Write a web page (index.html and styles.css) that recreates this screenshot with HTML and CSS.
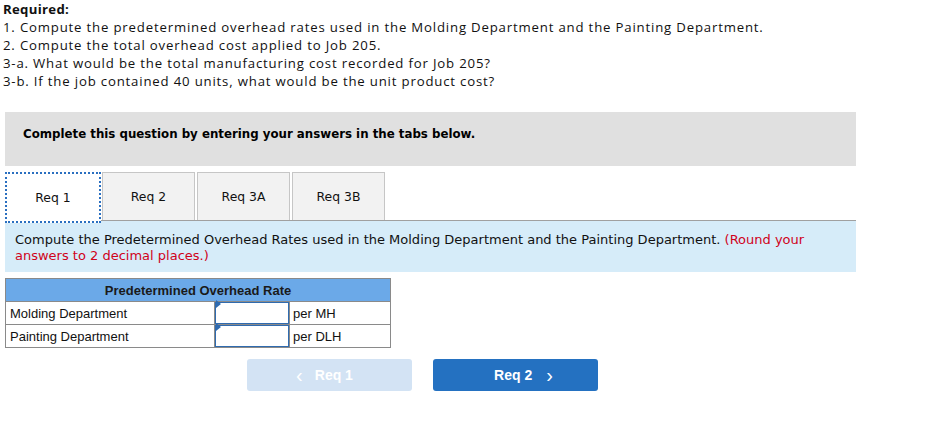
FILE: index.html
```html
<!DOCTYPE html>
<html>
<head>
<meta charset="utf-8">
<link rel="stylesheet" href="styles.css">
</head>
<body>
<div class="required">
  <div class="req-title">Required:</div>
  <div>1. Compute the predetermined overhead rates used in the Molding Department and the Painting Department.</div>
  <div>2. Compute the total overhead cost applied to Job 205.</div>
  <div>3-a. What would be the total manufacturing cost recorded for Job 205?</div>
  <div>3-b. If the job contained 40 units, what would be the unit product cost?</div>
</div>
<div class="panel">
  <div class="notice">Complete this question by entering your answers in the tabs below.</div>
  <div class="tabs">
    <div class="tab active">Req 1</div>
    <div class="tab">Req 2</div>
    <div class="tab">Req 3A</div>
    <div class="tab">Req 3B</div>
  </div>
  <div class="instructions">Compute the Predetermined Overhead Rates used in the Molding Department and the Painting Department. <span class="red">(Round your</span> <span class="red">answers to 2 decimal places.)</span></div>
  <table class="rates">
    <tr><th colspan="3">Predetermined Overhead Rate</th></tr>
    <tr><td class="c1">Molding Department</td><td class="c2"><div class="inp"></div></td><td class="c3">per MH</td></tr>
    <tr><td class="c1">Painting Department</td><td class="c2"><div class="inp"></div></td><td class="c3">per DLH</td></tr>
  </table>
  <div class="nav">
    <div class="btn prev"><span class="chev">&lsaquo;</span>Req 1</div>
    <div class="btn next">Req 2<span class="chev">&rsaquo;</span></div>
  </div>
</div>
</body>
</html>
```
FILE: styles.css
```css
body {
  margin: 0;
  background: #fff;
  color: #111;
}
.required {
  padding: 0 0 0 3px;
  font-family: "Open Sans", sans-serif;
  font-size: 13.2px;
  letter-spacing: 0.82px;
  line-height: 18px;
  color: #111;
}
.req-title {
  font-weight: bold;
  letter-spacing: 0.3px;
}
.panel {
  margin: 22px 0 0 5px;
  width: 851px;
}
.notice {
  background: #e0e0e0;
  height: 54px;
  box-sizing: border-box;
  padding: 14px 0 0 18px;
  font-family: "DejaVu Sans", Verdana, sans-serif;
  font-weight: bold;
  font-size: 11.8px;
  line-height: 16px;
  color: #000;
}
.tabs {
  display: flex;
  gap: 2px;
  margin-top: 6px;
  border-bottom: 1px solid #a0a0a0;
  height: 48px;
}
.tab {
  width: 91px;
  height: 47px;
  background: #f2f2f2;
  border: 1px solid #c6c6c6;
  border-bottom: none;
  display: flex;
  align-items: center;
  justify-content: center;
  font-family: "DejaVu Sans", Verdana, sans-serif;
  font-size: 12.4px;
  color: #111;
}
.tab.active {
  width: 92px;
  height: 47px;
  background: #fff;
  border: 2px dotted #2a6fc0;
  margin-bottom: -1px;
  margin-right: -1px;
}
.instructions {
  background: #d6ecf9;
  height: 51px;
  box-sizing: border-box;
  padding: 11px 20px 0 10px;
  font-family: "DejaVu Sans", Verdana, sans-serif;
  font-size: 13px;
  line-height: 16px;
  color: #111;
}
.red {
  color: #d0021b;
}
.rates {
  margin-top: 6px;
  border-collapse: collapse;
  font-family: Arial, "Liberation Sans", sans-serif;
  font-size: 13px;
}
.rates th {
  background: #6ba9e8;
  border: 1px solid #8a8a8a;
  height: 22px;
  padding: 0;
  font-weight: bold;
  color: #1a1a1a;
  text-align: center;
}
.rates td {
  border: 1px solid #8a8a8a;
  height: 22px;
  padding: 0;
  color: #111;
}
.c1 {
  width: 204px;
  padding-left: 4px !important;
}
.c2 {
  width: 74px;
}
.c3 {
  width: 97px;
  padding-left: 3px !important;
}
.inp {
  position: relative;
  height: 20px;
  border: 1px solid #2f6bb0;
  background: #fff;
}
.inp::before {
  content: "";
  position: absolute;
  left: 0;
  top: 0;
  border-top: 4px solid transparent;
  border-bottom: 4px solid transparent;
  border-left: 5px solid #2f6bb0;
  transform: translateY(-3px);
}
.nav {
  display: flex;
  gap: 21px;
  margin: 11px 0 0 242px;
}
.btn {
  width: 165px;
  height: 32px;
  border-radius: 3px;
  display: flex;
  align-items: center;
  justify-content: center;
  font-family: Arial, "Liberation Sans", sans-serif;
  font-weight: bold;
  font-size: 14px;
  color: #fff;
}
.prev {
  background: #d3e3f4;
  padding-right: 10px;
  box-sizing: border-box;
}
.next {
  background: #2471c1;
  padding-left: 16px;
  box-sizing: border-box;
}
.prev .chev {
  margin-right: 12px;
  font-size: 20px;
  font-weight: normal;
}
.next .chev {
  margin-left: 14px;
  font-size: 20px;
  font-weight: normal;
}
```
